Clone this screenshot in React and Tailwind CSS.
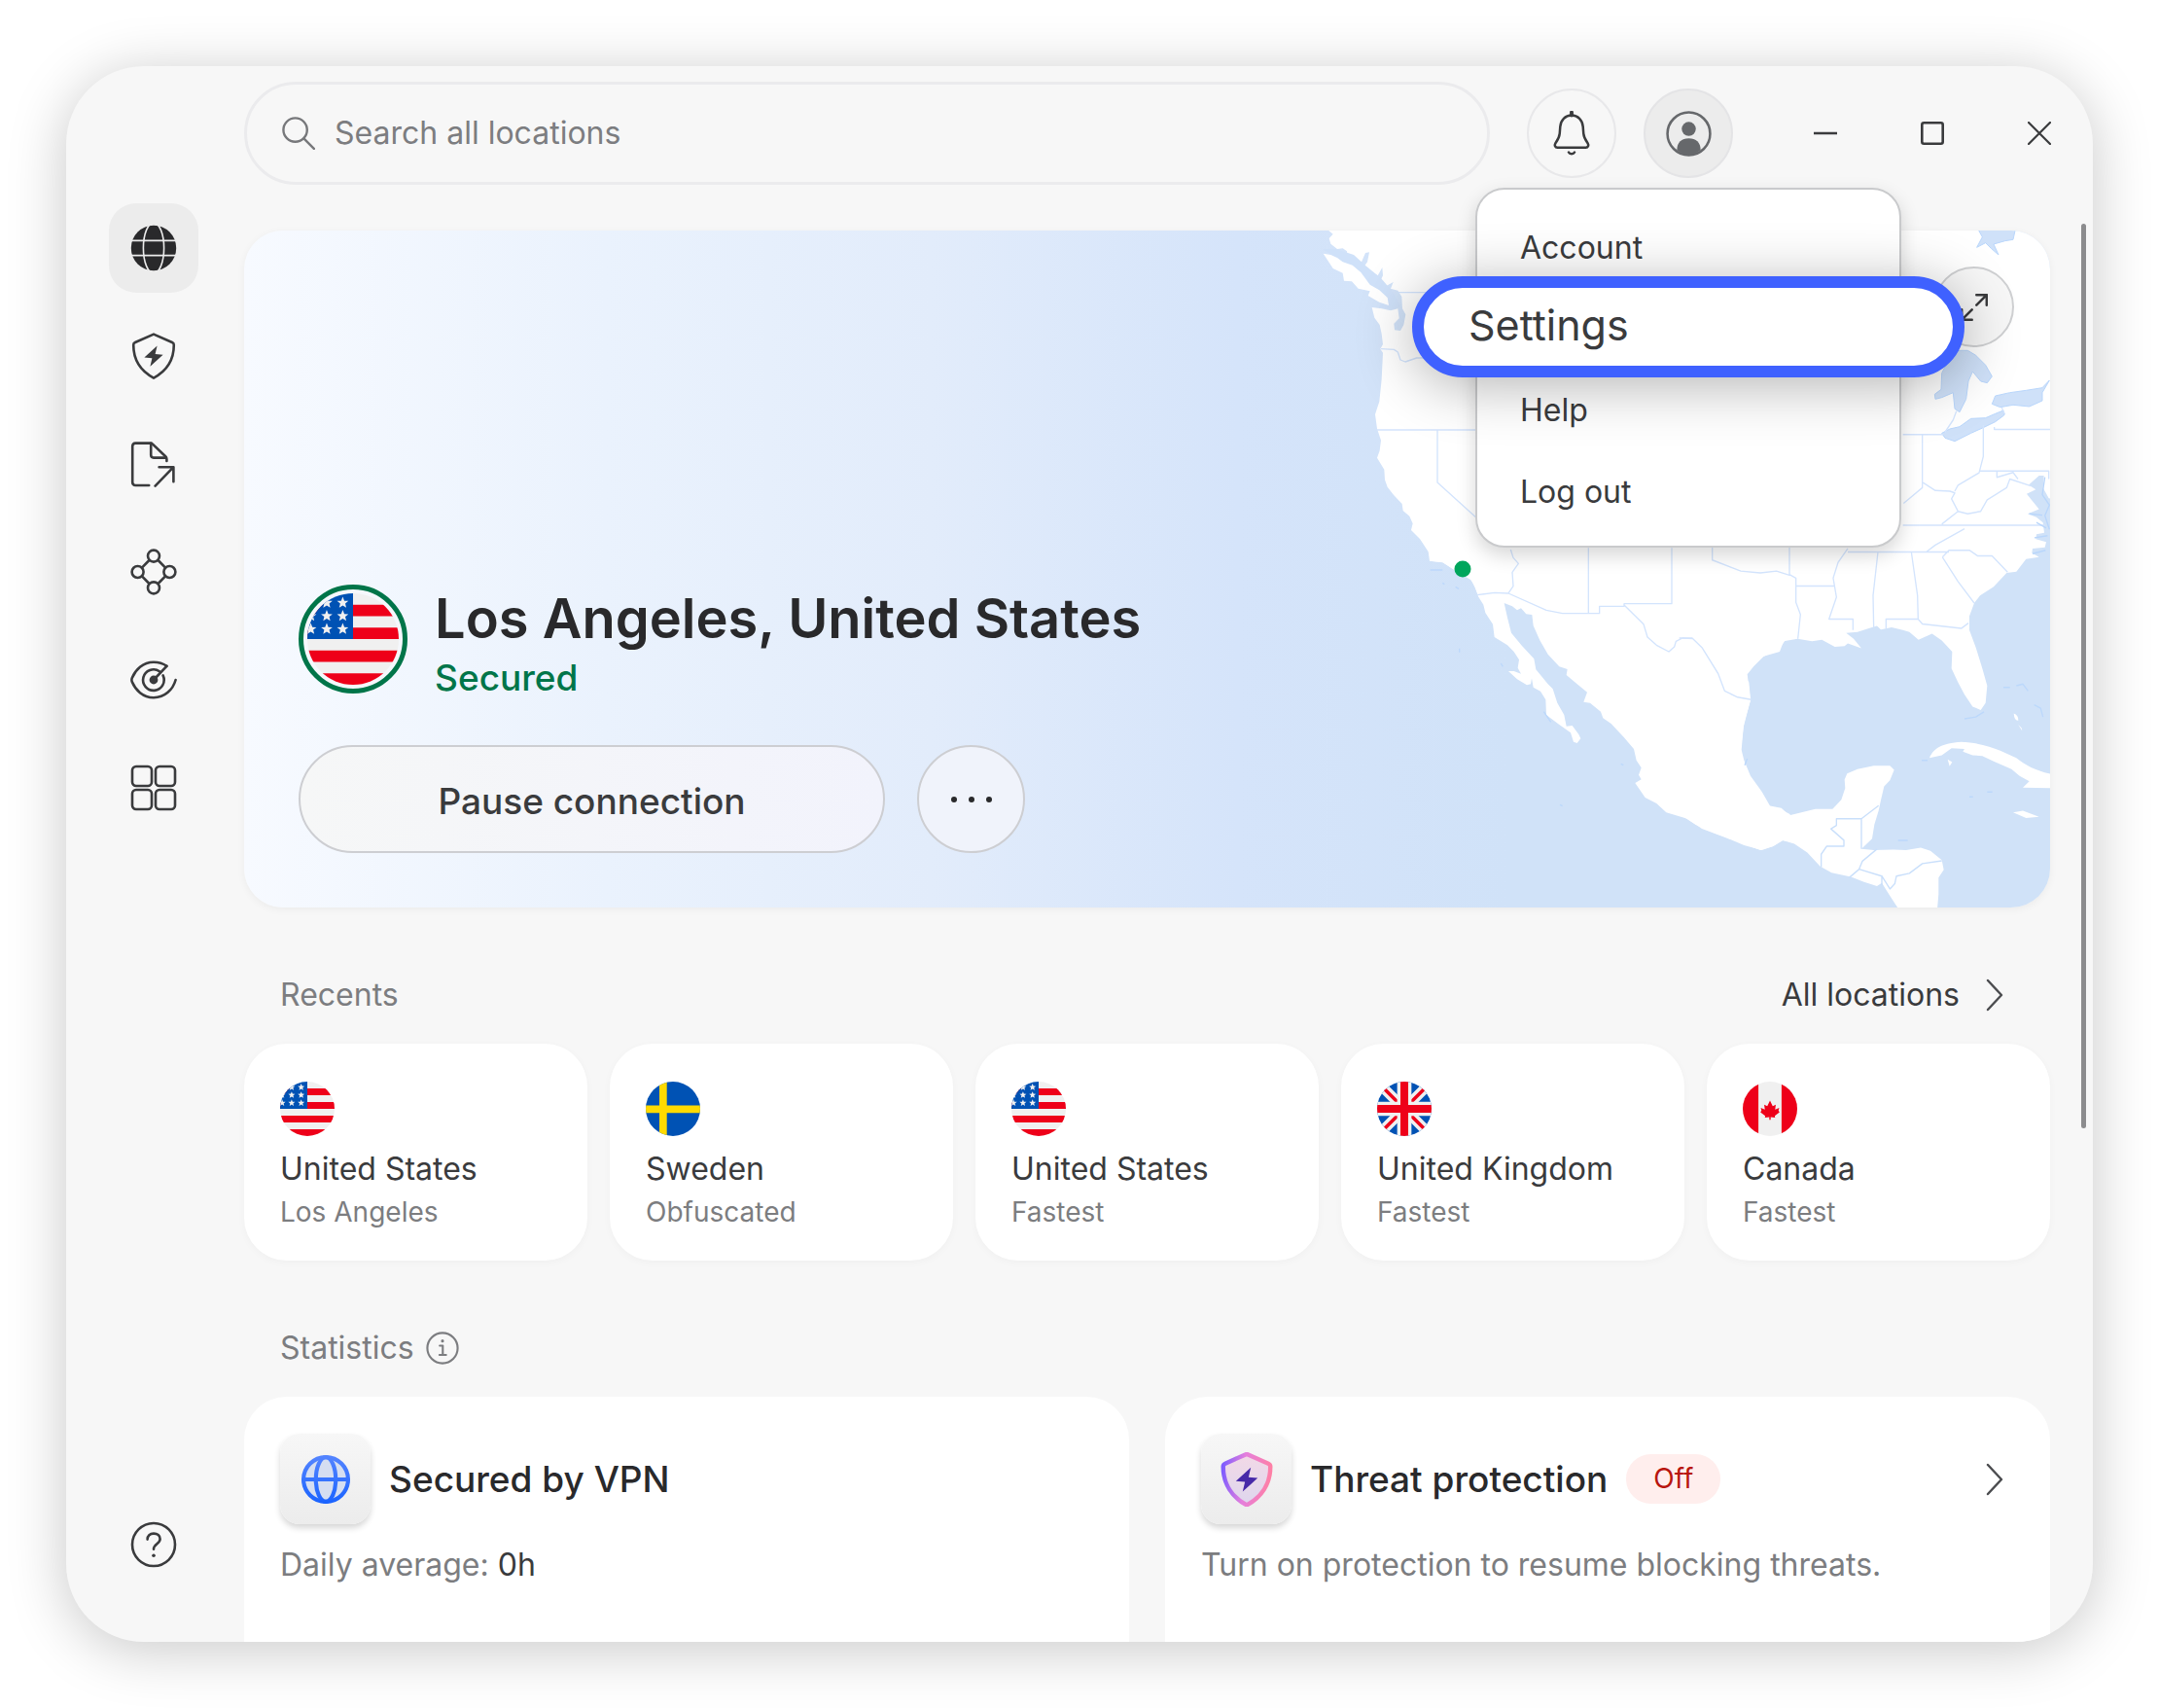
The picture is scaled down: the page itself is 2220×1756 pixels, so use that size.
import { useState } from 'react';

const recents = [
  { id: 1, flag: 'us', country: 'United States', detail: 'Los Angeles' },
  { id: 2, flag: 'se', country: 'Sweden', detail: 'Obfuscated' },
  { id: 3, flag: 'us', country: 'United States', detail: 'Fastest' },
  { id: 4, flag: 'gb', country: 'United Kingdom', detail: 'Fastest' },
  { id: 5, flag: 'ca', country: 'Canada', detail: 'Fastest' },
];

const STAR = 'M0-.5.14-.15.5-.13.22.1.31.46 0 .26-.31.46-.22.1-.5-.13-.14-.15z';

const flagArt = {
  us: (
    <>
      <rect width="8" height="8" fill="#f0f0f0" />
      <path d="M0 1h8v1H0zM0 3h8v1H0zM0 5h8v1H0zM0 7h8v1H0z" fill="#ee0019" />
      <rect width="4" height="4" fill="#0052b4" />
      {[0.3, 1.7, 3.1].map((x) =>
        [0.8, 1.95, 3.1].map((y) => (
          <path key={`${x}-${y}`} d={STAR} transform={`translate(${x} ${y})`} fill="#f0f0f0" />
        ))
      )}
    </>
  ),
  se: (
    <>
      <rect width="8" height="8" fill="#0052b4" />
      <path d="M2 0h1.1v3.5H8v1.1H3.1V8H2V4.6H0V3.5h2z" fill="#ffda00" />
    </>
  ),
  gb: (
    <>
      <rect width="8" height="8" fill="#0052b4" />
      <path d="M0 0l8 8M8 0L0 8" stroke="#f0f0f0" strokeWidth="1.5" />
      <path d="M0 0l8 8M8 0L0 8" stroke="#ee0019" strokeWidth=".5" />
      <path d="M4 0v8M0 4h8" stroke="#f0f0f0" strokeWidth="2.1" />
      <path d="M4 0v8M0 4h8" stroke="#ee0019" strokeWidth="1.15" />
    </>
  ),
  ca: (
    <>
      <rect width="8" height="8" fill="#f0f0f0" />
      <path d="M0 0h2.3v8H0zM5.7 0H8v8H5.7z" fill="#ee0019" />
      <path
        d="M4 2.8 4.4 3.6 4.85 3.4 4.75 4.1 5.35 3.85 5.25 4.25 5.4 4.5 4.7 5.05 4.75 5.3 4.1 5.2V5.6H3.9V5.2L3.25 5.3 3.3 5.05 2.6 4.5 2.75 4.25 2.65 3.85 3.25 4.1 3.15 3.4 3.6 3.6z"
        fill="#ee0019"
      />
    </>
  ),
};

const Flag = ({ code, className }) => (
  <svg viewBox="0 0 8 8" className={`overflow-hidden rounded-full ${className}`} aria-hidden="true">
    {flagArt[code]}
  </svg>
);

const Icon = ({ className = 'size-12', children, ...rest }) => (
  <svg
    viewBox="0 0 24 24"
    className={className}
    fill="none"
    stroke="currentColor"
    strokeWidth="1.3"
    strokeLinecap="round"
    strokeLinejoin="round"
    aria-hidden="true"
    {...rest}
  >
    {children}
  </svg>
);

const SHIELD = 'M12 .8 21.5 5q.9.4.9 1.3C22.4 14 18.4 19.9 12 23.3 5.6 19.9 1.6 14 1.6 6.3q0-.9.9-1.3z';
const BOLT = 'M13.8 6.8 7.2 12.8l4 .3-1 4.3 6.6-6-4-.4z';

const navItems = [
  {
    label: 'VPN',
    icon: (
      <Icon>
        <circle cx="12" cy="12" r="11.6" fill="currentColor" stroke="none" />
        <g stroke="#ececec" strokeWidth=".8">
          <path d="M.5 8.2h23M.5 15.8h23" />
          <ellipse cx="12" cy="12" rx="5.3" ry="13" />
        </g>
      </Icon>
    ),
  },
  {
    label: 'Threat protection',
    icon: (
      <Icon>
        <path d={SHIELD} />
        <path d={BOLT} fill="currentColor" stroke="none" />
      </Icon>
    ),
  },
  {
    label: 'File sharing',
    icon: (
      <Icon>
        <path d="M9.6 23H2.7Q1.1 23 1.1 21.4V2.9q0-1.6 1.6-1.6h7.6q.7 0 1.2.5l6.6 6.3q.6.6.6 1.4v1" />
        <path d="M10.6 1.4v6q0 1.4 1.4 1.4h6.4M12.8 23.3l9.3-9.6M14.8 13.6h7.4v7.5" />
      </Icon>
    ),
  },
  {
    label: 'Mesh network',
    icon: (
      <Icon>
        <circle cx="12" cy="3.8" r="3" />
        <circle cx="12" cy="20.2" r="3" />
        <circle cx="3.8" cy="12" r="3" />
        <circle cx="20.2" cy="12" r="3" />
        <path d="m9.7 6-3.6 3.7M14.3 6l3.6 3.7M9.7 18l-3.6-3.7M14.3 18l3.6-3.7" />
      </Icon>
    ),
  },
  {
    label: 'Dark web monitor',
    icon: (
      <Icon>
        <path d="M18.7 4.9C16.6 3.4 14.4 2.9 12 2.9 6.4 2.9 2.6 6.9.9 11q-.4 1 0 2c1.7 4.1 5.5 8.1 11.1 8.1 5.8 0 9.9-4.1 11.3-9.1" />
        <path d="M15 7.6a5.4 5.4 0 1 0 1.8 2.1M12 12l6.7-7.1" />
        <circle cx="12" cy="12" r="2.2" fill="currentColor" stroke="none" />
      </Icon>
    ),
  },
  {
    label: 'All products',
    icon: (
      <Icon>
        <rect x="1" y="1" width="10" height="10" rx="2" />
        <rect x="13" y="1" width="10" height="10" rx="2" />
        <rect x="1" y="13" width="10" height="10" rx="2" />
        <rect x="13" y="13" width="10" height="10" rx="2" />
      </Icon>
    ),
  },
];

const ChevronRight = () => (
  <svg viewBox="0 0 18 34" className="h-[34px] w-[18px]" fill="none" stroke="#4b4c4f" strokeWidth="2.4" aria-hidden="true">
    <path d="M2 2l14 15L2 32" strokeLinecap="round" strokeLinejoin="round" />
  </svg>
);

const Sidebar = () => {
  const [active, setActive] = useState('VPN');

  return (
    <aside className="flex w-[183px] shrink-0 flex-col justify-between pt-[141px] pb-[54px] pl-11 text-[#3a3b3d]">
      <nav className="flex flex-col gap-[19px]">
        {navItems.map((item) => (
          <button
            key={item.label}
            type="button"
            aria-label={item.label}
            onClick={() => setActive(item.label)}
            className={`flex size-[92px] items-center justify-center rounded-[28px] ${
              active === item.label ? 'bg-[#ececec] text-[#29292b]' : ''
            }`}
          >
            {item.icon}
          </button>
        ))}
      </nav>
      <button type="button" aria-label="Help" className="flex size-[92px] items-center justify-center">
        <Icon>
          <circle cx="12" cy="12" r="11" />
          <path d="M8.8 9.3c0-1.9 1.3-3 3.2-3s3.3 1.1 3.3 2.8c0 2.6-3.3 2.5-3.3 5.3" />
          <circle cx="12" cy="17.6" r=".9" fill="currentColor" stroke="none" />
        </Icon>
      </button>
    </aside>
  );
};

const AccountMenu = () => (
  <ul className="absolute top-[102px] left-1/2 w-[438px] -translate-x-1/2 rounded-[30px] border-2 border-[#c9cacc] bg-white pt-[18px] pb-[14px] text-[32px] leading-[48px] text-[#3a3b3d] shadow-[0_8px_20px_rgba(0,0,0,0.16)]">
    <li>
      <button type="button" className="h-[84px] w-full px-11 text-left">Account</button>
    </li>
    <li className="relative h-[83px]">
      {/* Highlighted entry sits over the menu and sticks out on both sides */}
      <button
        type="button"
        className="absolute -top-[13px] -left-[67px] h-[104px] w-[568px] rounded-full border-12 border-[#3f61ff] bg-white pb-1 pl-[46px] text-left text-[43px] shadow-[0_8px_60px_rgba(0,0,0,0.3)]"
      >
        Settings
      </button>
    </li>
    <li>
      <button type="button" className="h-[84px] w-full px-11 text-left">Help</button>
    </li>
    <li>
      <button type="button" className="h-[83px] w-full px-11 text-left">Log out</button>
    </li>
  </ul>
);

const Header = () => (
  <header className="relative z-10 flex items-center pt-4">
    <label className="mr-[38px] flex h-[106px] flex-1 items-center gap-5 rounded-full border-3 border-[#ebebed] px-9">
      <Icon className="size-[34px] text-[#77787b]" strokeWidth="1.7">
        <circle cx="9.6" cy="9.6" r="8.6" />
        <path d="m16 16 7.2 7.2" />
      </Icon>
      <input
        type="text"
        aria-label="Search all locations"
        placeholder="Search all locations"
        className="min-w-0 flex-1 bg-transparent text-[32px] leading-[48px] outline-none placeholder:text-[#7c7d80]"
      />
    </label>
    <button
      type="button"
      aria-label="Notifications"
      className="mr-7 flex size-[92px] items-center justify-center rounded-full border-2 border-[#e8e8ea] text-[#3a3b3d]"
    >
      <Icon className="size-[46px]">
        <path d="M12 .8v1.6" strokeWidth="2" />
        <path d="M12 2.4C8.6 2.4 6.2 4.9 5.9 8.4l-.3 3.8c-.2 2.3-1 3.3-2.3 5.2-.6 1-.2 2.3 1.1 2.3h15.2c1.3 0 1.7-1.3 1.1-2.3-1.3-1.9-2.1-2.9-2.3-5.2l-.3-3.8C17.8 4.9 15.4 2.4 12 2.4z" />
        <path d="M10.4 22.2c.6 1.2 2.6 1.2 3.2 0" />
      </Icon>
    </button>
    <div className="relative mr-10">
      <button
        type="button"
        aria-label="Profile"
        className="flex size-[92px] items-center justify-center rounded-full border-2 border-[#e4e4e6] bg-[#ececec] text-[#66686b]"
      >
        <Icon className="size-[47px]">
          <circle cx="12" cy="12" r="11.2" />
          <circle cx="12" cy="9.5" r="3.7" fill="currentColor" stroke="none" />
          <path d="M5.8 20.6c0-4.2 2.4-6.2 6.2-6.2s6.2 2 6.2 6.2C14.9 23.8 9.1 23.8 5.8 20.6z" fill="currentColor" stroke="none" />
        </Icon>
      </button>
      <AccountMenu />
    </div>
    <button type="button" aria-label="Minimize" className="flex h-[92px] w-[110px] items-center justify-center">
      <Icon className="size-6 text-[#3a3b3d]" strokeWidth="2.6" strokeLinecap="butt">
        <path d="M0 12h24" />
      </Icon>
    </button>
    <button type="button" aria-label="Maximize" className="flex h-[92px] w-[110px] items-center justify-center">
      <Icon className="size-6 text-[#3a3b3d]" strokeWidth="2.6">
        <rect x="1.3" y="1.3" width="21.4" height="21.4" rx="2" />
      </Icon>
    </button>
    <button type="button" aria-label="Close" className="flex h-[92px] w-[110px] items-center justify-center">
      <Icon className="size-6 text-[#3a3b3d]" strokeWidth="2.2">
        <path d="M1 1l22 22M23 1 1 23" />
      </Icon>
    </button>
  </header>
);

// North America, drawn in three overlapping land pieces
const WorldMap = () => (
  <svg viewBox="1350 237 758 696" className="absolute inset-y-0 right-0 h-full" aria-hidden="true">
    <g fill="#fff">
      <g transform="translate(1350 230) scale(.33333)">
        <path d="M45 18 62 32 50 45 55 62 75 78 92 76 105 85 106 102 125 108 150 118 162 90 174 88 168 118 158 132 175 145 200 160 214 135 216 160 208 176 226 192 248 180 240 200 262 206 274 225 276 262 286 280 280 312 270 330 252 328 250 308 266 292 262 262 240 268 212 262 182 258 190 290 206 312 212 340 216 372 208 386 216 398 212 480 205 548 192 588 198 632 210 668 206 700 198 722 220 758 222 790 230 812 250 838 275 864 278 885 298 902 308 925 303 945 330 972 356 1012 360 1040 400 1044 430 1064 465 1085 490 1100 508 1140 1400 1140 1400 18z" />
      </g>
      <g transform="translate(1440 560) scale(.33333)">
        <path d="M75 0 90 25 90 50 130 55 165 76 195 92 215 105 230 130 240 160 256 185 262 210 285 245 290 285 330 310 350 330 366 355 362 380 372 398 350 390 333 390 360 415 390 433 402 430 405 412 410 440 432 452 448 478 450 525 490 555 525 580 534 608 545 612 556 598 550 585 530 558 512 560 505 525 484 488 470 445 455 430 418 385 412 352 375 312 342 272 330 225 320 180 345 190 360 202 372 196 388 214 406 216 410 250 430 295 455 338 490 376 515 384 512 402 545 430 576 455 565 485 585 488 618 515 625 535 650 552 690 595 720 630 728 665 743 688 735 710 743 724 724 735 755 780 790 798 820 826 885 845 930 876 1000 902 1060 927 1115 942 1150 930 1178 912 1200 916 1260 900 1200 830 1170 815 1135 805 1105 750 1075 715 1055 660 1050 630 1060 550 1080 480 1070 400 1090 375 1120 345 1170 320 1190 290 1300 200 1300 0z" />
      </g>
      <g transform="translate(1730 380) scale(.33333 .35714)">
        <path d="M-60 -410-60 1255 0 1285 40 1310 100 1335 160 1355 240 1383 280 1372 310 1355 345 1365 385 1390 425 1430 460 1448 520 1460 560 1475 600 1487 615 1478 640 1515 675 1565H785L790 1510 790 1462 806 1440 800 1412 765 1385 735 1376 690 1383 650 1382 590 1383 552 1380 585 1350 592 1310 605 1270 612 1240 622 1200 640 1182 653 1152 640 1140 590 1140 540 1150 508 1163 500 1180 502 1205 490 1238 463 1265 410 1265 330 1283 305 1262 270 1256 245 1215 210 1170 190 1125 182 1095 188 1030 210 950 205 900 190 880 215 850 250 825 300 812 312 782 355 775 400 782 430 778 470 798 500 796 510 788 552 802 528 775 505 758 540 755 575 745 600 738 612 748 645 742 680 750 700 755 728 778 770 760 800 780 832 812 830 860 850 900 870 935 895 970 920 980 935 960 940 910 925 860 905 800 885 750 885 710 900 672 918 650 960 625 1000 585 1030 582 1060 545 1100 540 1078 528 1080 515 1118 512 1122 496 1090 488 1092 474 1116 470 1112 440 1092 425 1065 415 1100 402 1062 358 1090 345 1068 332 1100 305 1115 305 1112 340 1130 370 1140 372V-410z" />
        <path d="M762 1118C775 1090 800 1076 860 1072 940 1074 1000 1105 1030 1118 1060 1140 1090 1155 1140 1165V1205L1050 1203 1070 1185 1040 1170 1015 1150 960 1128 925 1112 895 1110 865 1100 870 1092 830 1090 800 1110z" />
        <path d="M1020 1275 1050 1270 1100 1287 1060 1291zM1022 990q14 4 14 20-12 2-14-20zM1036 1022l10 10 2 8zM818 1122l14 8-8 12z" />
      </g>
    </g>
    {/* Great Lakes */}
    <g transform="translate(1960 237) scale(.33333)" fill="#cfe1f9" stroke="#b9d6fb" strokeWidth="3">
      <path d="M222-4H337L330 28 305 32 270 42 285 75 262 55 245 38 218 52 235 20z" />
      <path d="M150 375 165 370 190 370 215 385 245 415 265 450 250 470 230 465 205 435 192 465 185 520 165 560 150 550 145 500 110 515 90 520 88 505 108 490 110 440 130 400z" />
      <path d="M265 535 275 510 320 500 370 493 420 485 442 462 420 500 420 525 380 543 330 538 290 545z" />
      <path d="M110 625 135 612 165 605 200 580 245 578 275 565 300 555 302 570 275 590 240 607 200 625 150 650 120 640z" />
    </g>
    <g transform="translate(1350 230) scale(.33333)">
      <path d="M30 78 72 78 126 96 162 129 210 168 246 210 270 255 252 264 204 258 228 228 174 186 126 132 84 114z" fill="#cfe1f9" />
      {/* Vancouver Island */}
      <path
        fill="#fff"
        d="M32 92 55 96 75 105 92 118 122 128 148 150 176 188 205 205 230 228 234 252 205 242 170 222 176 208 140 200 120 178 96 176 92 152 62 138z"
      />
    </g>
    <g fill="none" stroke="#d3e4fd" strokeWidth="4" strokeLinejoin="round">
      <g transform="translate(1350 230) scale(.33333)">
        <path d="M262 212H600M210 386 250 388 262 396 270 420 285 426 320 414 520 412M198 636H520M384 636V798L510 912M610 1005 618 1030 634 1048 615 1075 618 1118 603 1140M506 1145 560 1138 603 1140 720 1192 770 1202H884V1180H960V1172H1107V1000M850 1000V1200M960 1176 1020 1235 1032 1275 1060 1300 1098 1320 1115 1305 1120 1288 1140 1278 1172 1280" />
      </g>
      <g transform="translate(1730 380) scale(.33333 .35714)">
        <path d="M-10 773H30L60 800 110 875 130 925 170 943 212 950M92 500V548L180 580 240 585 290 580 330 592V510M330 590 350 600V670L364 705 356 775M350 623H470M510 515 480 555 465 600 475 655 452 718H526V750M510 525H750M603 525 588 650 590 742M706 525 725 650 727 718H628V745M727 718 740 732 860 745 882 730M802 540 850 610 900 672M802 540 822 520 885 520 910 536H955L1003 583M752 525 780 505 870 458M750 525H822M680 448H1120M680 187H805M740 187V340L682 385M742 325 780 348 825 350 840 355 830 372 850 408 800 445M850 408 880 415 920 408 940 375 1000 340 1010 315 1075 335M840 350 850 333 915 297 928 250V160M915 292H1130V315M970 292V310L1020 296 1035 315M962 165V172H1134M845 120 835 145 810 180M985 110 995 130" />
        <path stroke="#c9dffb" d="M552 1380V1293H475V1312L458 1322 498 1355V1372H445L428 1395V1432M515 1462 545 1438 555 1415 600 1380M545 1438 615 1458V1485M615 1458 640 1495 655 1480 660 1458 700 1450 740 1422 800 1414M552 1293 605 1255" />
        <path stroke="#b9d6fb" d="M1118 310l-8 50 22 30-14 30 14 40M1070 415l40 4M1092 440l30 16M1086 484l40-6M1080 530l40-10" />
        <path stroke="#bcd8fb" d="M870 1005 905 1000 930 985M990 915H1010M1030 910 1050 905 1066 925M1085 965 1105 975 1112 1000M738 1125H756M665 1355H695M885 1230H896M940 1216H956" />
      </g>
      <g transform="translate(1440 560) scale(.33333)" stroke="#bcd8fb">
        <path d="M92 78H130M130 118l6 4M170 130l10 6M182 320v12M310 366l6 10M680 676l8 4M492 802l8 4M442 515l22 32M1070 660l-8 20" />
      </g>
    </g>
    <circle cx="1504" cy="585" r="8.5" fill="#00a65c" />
  </svg>
);

const ConnectionCard = () => (
  <section className="relative mt-[47px] flex h-[696px] shrink-0 flex-col justify-end overflow-hidden rounded-[40px] bg-[linear-gradient(90deg,#f7faff_0%,#eaf2fd_20%,#e2ecfb_38%,#d5e4fa_55%,#d0e2f8_70%)] p-14 shadow-[0_2px_8px_rgba(0,0,0,0.05)]">
    <WorldMap />
    <button
      type="button"
      aria-label="Expand map"
      className="absolute top-[37px] right-[37px] flex size-[83px] items-center justify-center rounded-full border-2 border-[#cfd0d2] bg-[#f7f7f7] text-[#3a3b3d]"
    >
      <Icon className="size-7" strokeWidth="2.2">
        <path d="M14 10 23 1M14 1h9v9M10 14 1 23M10 23H1v-9" />
      </Icon>
    </button>
    <div className="relative flex h-28 items-start gap-7">
      <span className="flex size-28 items-center justify-center rounded-full border-5 border-[#007549] bg-[#f5f8fc]">
        <Flag code="us" className="size-[94px]" />
      </span>
      <div className="pt-1">
        <h1 className="text-[56px] leading-[62px] font-semibold text-[#29292b]">Los Angeles, United States</h1>
        <p className="text-[37px] leading-[60px] font-medium text-[#007549]">Secured</p>
      </div>
    </div>
    <div className="relative mt-[53px] flex gap-[33px]">
      <button
        type="button"
        className="h-[111px] w-[603px] rounded-full border-2 border-[#cdced2] bg-linear-to-r from-[#f6f7f7] to-[#f2f3fc] pt-1 text-[37px] font-medium text-[#3a3b3d]"
      >
        Pause connection
      </button>
      <button
        type="button"
        aria-label="More options"
        className="flex size-[111px] items-center justify-center gap-3 rounded-full border-2 border-[#cdced2] bg-[#f0f3fb]"
      >
        <span className="size-1.5 rounded-full bg-[#29292b]"></span>
        <span className="size-1.5 rounded-full bg-[#29292b]"></span>
        <span className="size-1.5 rounded-full bg-[#29292b]"></span>
      </button>
    </div>
  </section>
);

const Recents = () => (
  <section>
    <div className="flex items-center justify-between px-[37px] pt-16 pb-6">
      <h2 className="text-[32px] leading-[52px] text-[#7c7d80]">Recents</h2>
      <a href="#locations" className="flex items-center gap-[27px] pr-[11px] text-[32px] leading-[52px] text-[#3a3b3d]">
        All locations
        <ChevronRight />
      </a>
    </div>
    <div className="grid grid-cols-5 gap-[23px]">
      {recents.map((item) => (
        <button
          key={item.id}
          type="button"
          className="flex h-[223px] flex-col items-start rounded-[44px] bg-white px-[37px] pt-[39px] text-left shadow-[0_2px_8px_rgba(0,0,0,0.03)]"
        >
          <Flag code={item.flag} className="size-14" />
          <span className="mt-2.5 text-[32px] leading-[48px] text-[#3a3b3d]">{item.country}</span>
          <span className="text-[28px] leading-[40px] text-[#7c7d80]">{item.detail}</span>
        </button>
      ))}
    </div>
  </section>
);

const IconTile = ({ children }) => (
  <span className="flex size-[93px] items-center justify-center rounded-[20px] bg-linear-to-b from-[#f7f7f7] to-[#ececec] shadow-[0_4px_6px_rgba(0,0,0,0.16)]">
    {children}
  </span>
);

const Statistics = () => (
  <section className="flex flex-1 flex-col">
    <div className="flex items-center gap-3 px-[37px] pt-16 pb-6 text-[#7c7d80]">
      <h2 className="text-[32px] leading-[52px]">Statistics</h2>
      <Icon className="size-[34px]" strokeWidth="1.5">
        <circle cx="12" cy="12" r="11" />
        <path d="M10 10.2h2.2v6.6M9.8 16.9h4.8" />
        <circle cx="12" cy="6.8" r="1.1" fill="currentColor" stroke="none" />
      </Icon>
    </div>
    <div className="grid flex-1 grid-cols-2 gap-[37px]">
      <article className="rounded-t-[44px] bg-white px-[37px] pt-[38px]">
        <div className="flex items-center gap-[19px]">
          <IconTile>
            <Icon className="size-[50px]" stroke="url(#globe-line)" strokeWidth="2">
              <defs>
                <linearGradient id="globe-line" x1="0" y1="0" x2="0" y2="24" gradientUnits="userSpaceOnUse">
                  <stop offset="0" stopColor="#5585ff" />
                  <stop offset="1" stopColor="#1a63ff" />
                </linearGradient>
              </defs>
              <circle cx="12" cy="12" r="11" fill="#d5def1" />
              <ellipse cx="12" cy="12" rx="4.9" ry="11" />
              <path d="M1 12h22" />
            </Icon>
          </IconTile>
          <h3 className="text-[37px] leading-[48px] font-medium text-[#29292b]">Secured by VPN</h3>
        </div>
        <p className="mt-[18px] text-[32px] leading-[48px] text-[#7c7d80]">
          Daily average: <span className="text-[#3a3b3d]">0h</span>
        </p>
      </article>
      <article className="rounded-t-[44px] bg-white px-[37px] pt-[38px]">
        <div className="flex items-center gap-[19px]">
          <IconTile>
            <Icon className="size-14" stroke="url(#shield-line)" strokeWidth="1.9">
              <defs>
                <linearGradient id="shield-line" x1="1" y1="8" x2="23" y2="10" gradientUnits="userSpaceOnUse">
                  <stop offset="0" stopColor="#7c5cff" />
                  <stop offset=".45" stopColor="#e57fdc" />
                  <stop offset="1" stopColor="#ff80a4" />
                </linearGradient>
                <linearGradient id="shield-fill" x1="0" y1="0" x2="0" y2="24" gradientUnits="userSpaceOnUse">
                  <stop offset="0" stopColor="#f3d9e6" />
                  <stop offset="1" stopColor="#ddd6ee" />
                </linearGradient>
              </defs>
              <path d={SHIELD} fill="url(#shield-fill)" />
              <path d={BOLT} fill="#4629a8" stroke="none" />
            </Icon>
          </IconTile>
          <h3 className="text-[37px] leading-[48px] font-medium text-[#29292b]">Threat protection</h3>
          <span className="rounded-full bg-[#ffeeed] px-7 text-[28px] leading-[51px] text-[#b8150e]">Off</span>
          <a href="#threat-protection" aria-label="Open threat protection" className="mr-[11px] ml-auto">
            <ChevronRight />
          </a>
        </div>
        <p className="mt-[18px] text-[32px] leading-[48px] text-[#7c7d80]">
          Turn on protection to resume blocking threats.
        </p>
      </article>
    </div>
  </section>
);

export default function App() {
  return (
    <div className="flex h-screen bg-white p-[68px] font-[Inter,sans-serif]">
      <div className="relative flex flex-1 overflow-hidden rounded-[80px] bg-[#f7f7f7] shadow-[0_8px_60px_rgba(0,0,0,0.22)]">
        <Sidebar />
        <div className="flex min-w-0 flex-1 flex-col">
          <Header />
          <main className="flex min-h-0 flex-1 flex-col pr-11">
            <ConnectionCard />
            <Recents />
            <Statistics />
          </main>
        </div>
        {/* Scroll thumb */}
        <div className="absolute top-[162px] right-[7px] h-[930px] w-[5px] rounded-full bg-[#8c8c8e]"></div>
      </div>
    </div>
  );
}
